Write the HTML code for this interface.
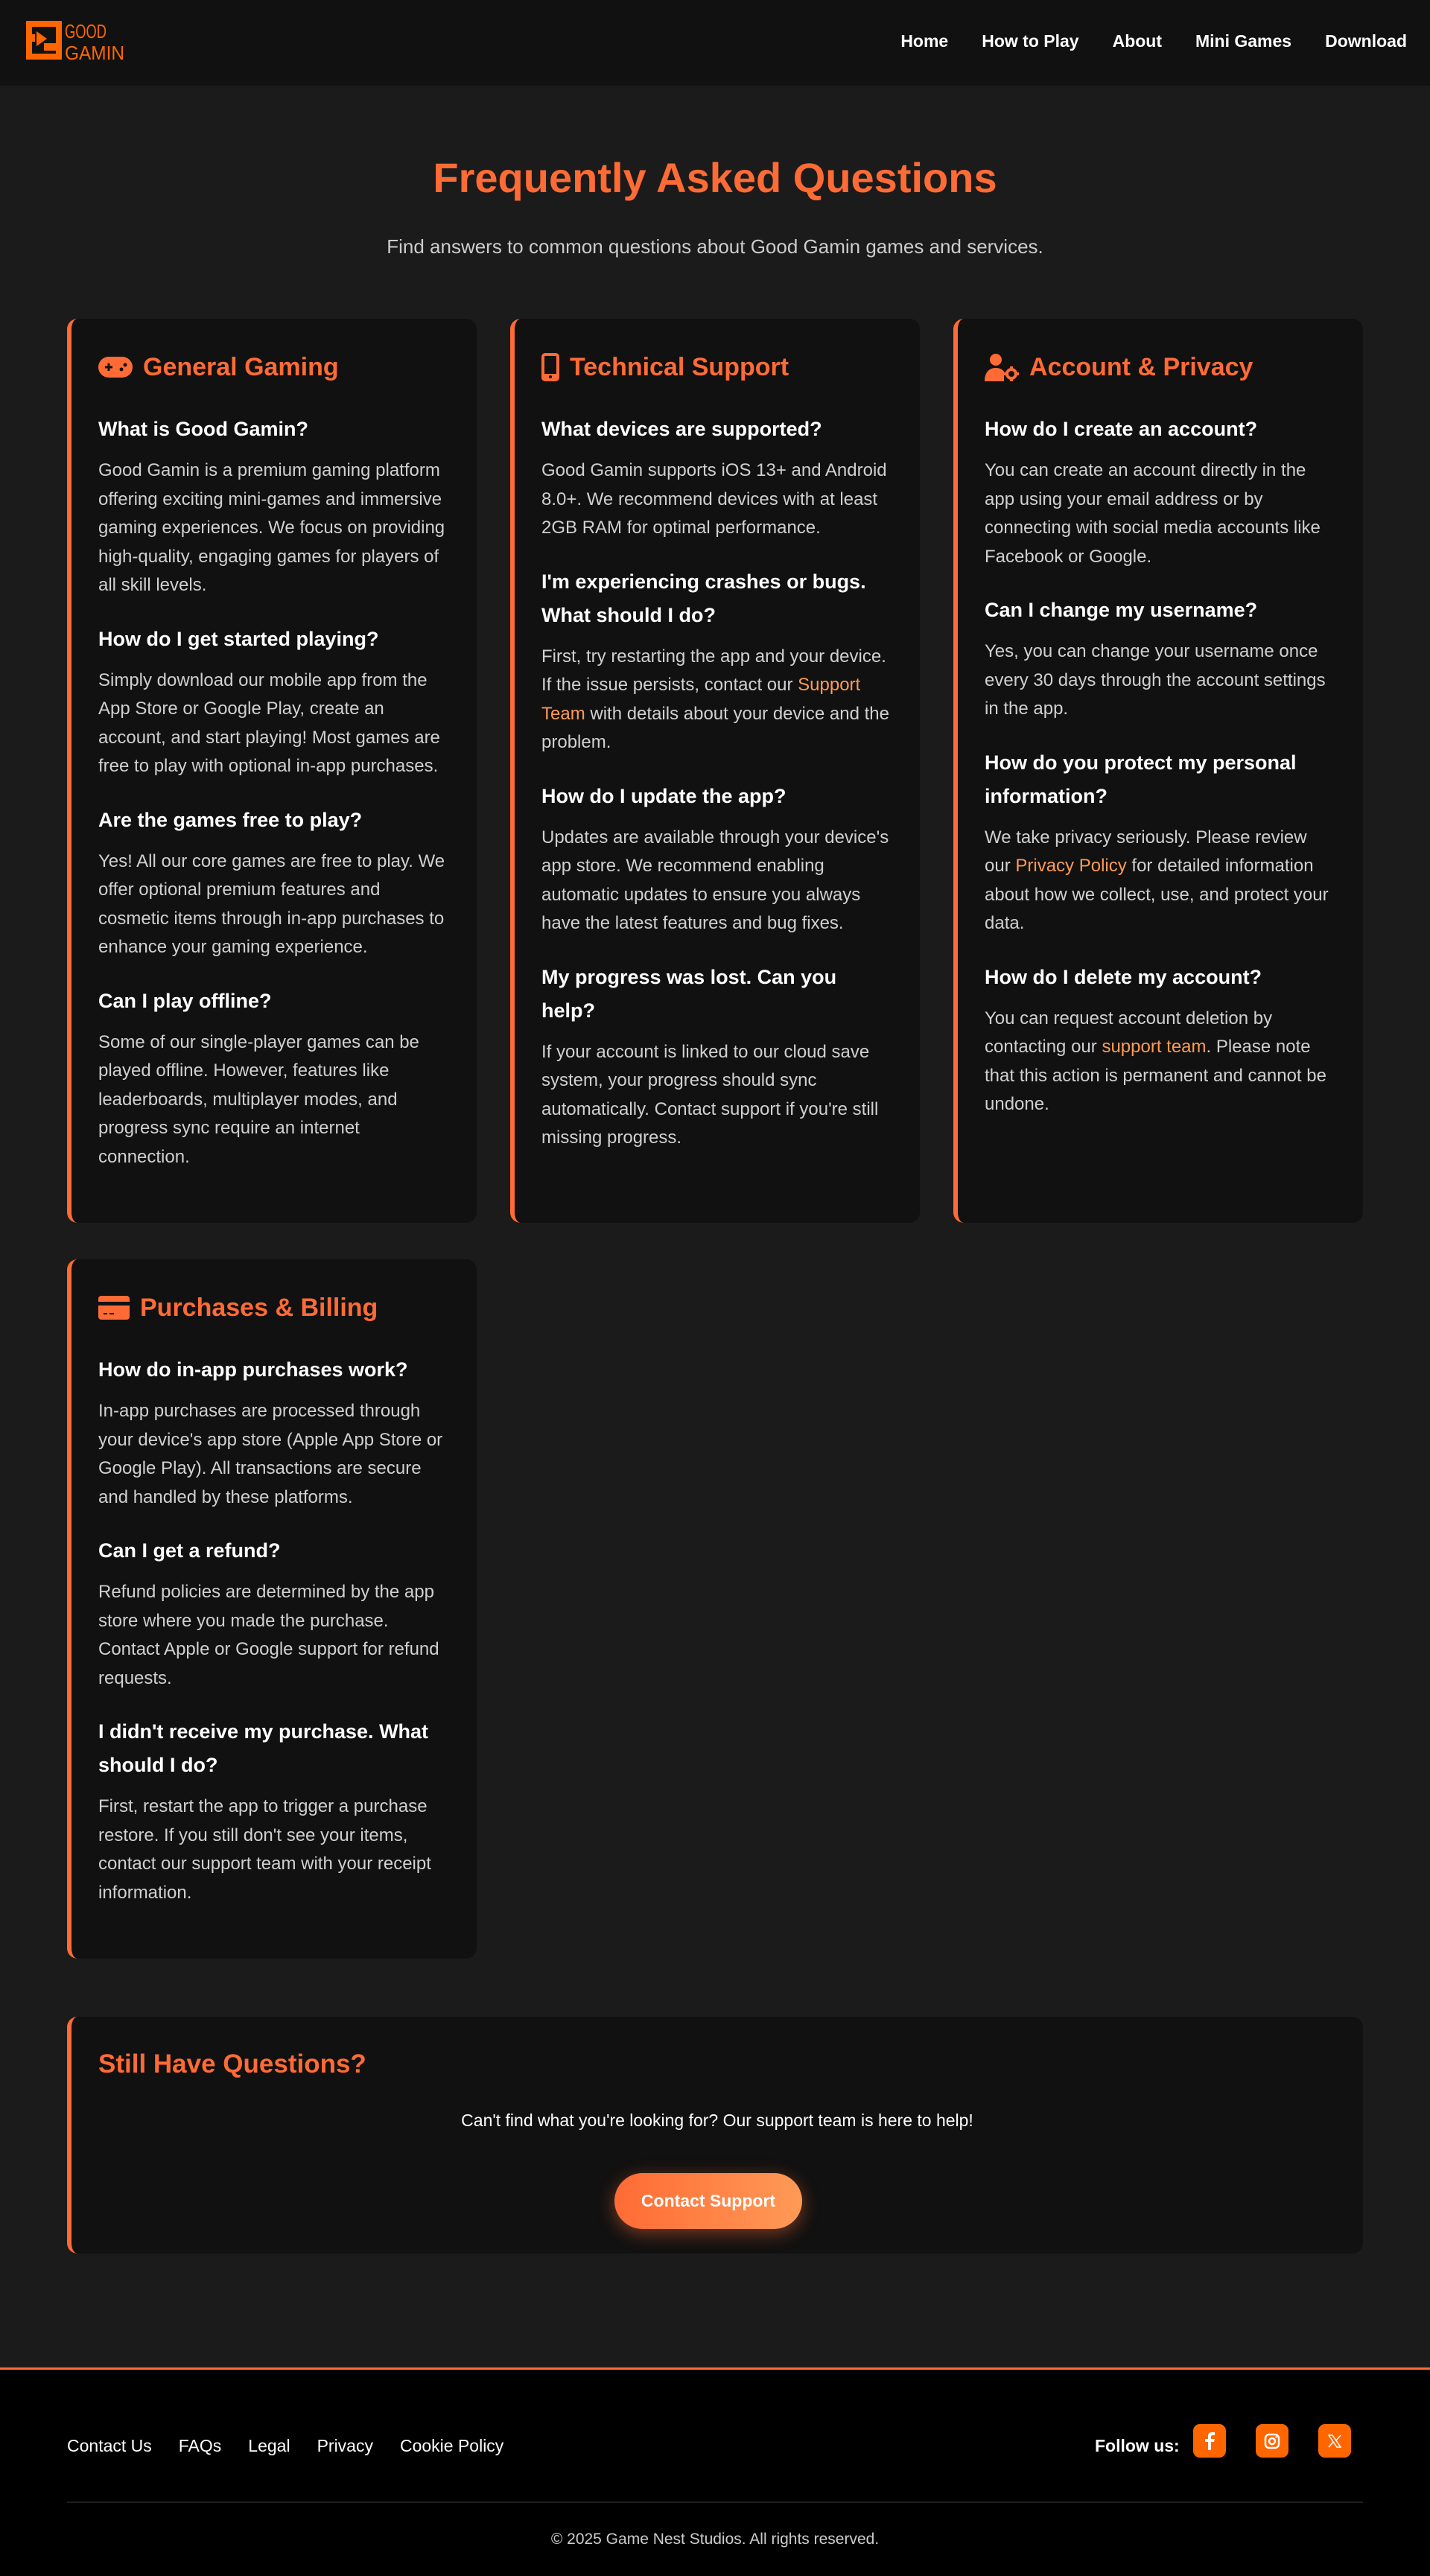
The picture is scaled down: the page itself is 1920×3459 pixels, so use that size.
<!DOCTYPE html>
<html><head><meta charset="utf-8">
<style>
*{box-sizing:border-box;margin:0;padding:0}
body{width:1920px;height:3459px;background:#1b1b1b;font-family:"Liberation Sans",Arial,sans-serif;color:#ccc;overflow:hidden}
nav{height:115px;background:#111;position:relative}
.logo{position:absolute;left:33px;top:26px}
.links{position:absolute;right:31px;top:42px;display:flex;gap:45px}
.links a{color:#fff;text-decoration:none;font-size:23px;font-weight:bold}
h1{color:#ff6b35;text-align:center;font-size:56px;font-weight:bold;position:absolute;top:206px;width:1920px}
.sub{position:absolute;top:316px;width:1920px;text-align:center;font-size:26px;color:#ccc}
.grid{position:absolute;left:90px;top:428px;width:1740px;display:grid;grid-template-columns:550px 550px 550px;column-gap:45px;row-gap:49px}
.card{background:#111;border-left:6px solid #ff6b35;border-radius:14px;padding:37px 38px 39px 36px}
.card h3{color:#ff6b35;font-size:34px;line-height:56px;font-weight:bold;margin-bottom:33px;display:flex;align-items:center;gap:14px}
.card h4{color:#fff;font-size:27px;line-height:45px;font-weight:bold;margin-bottom:14px}
.card p{font-size:24px;line-height:38.5px;margin-bottom:30px;color:#d0d0d0}
.card a{color:#ff9a56;text-decoration:none}
.cta{position:absolute;left:90px;top:2708px;width:1740px;height:318px;background:#111;border-left:6px solid #ff6b35;border-radius:14px}
.cta h2{position:absolute;left:36px;top:44px;color:#ff6b35;font-size:35px;font-weight:bold}
.cta p{position:absolute;top:126px;width:100%;text-align:center;color:#fff;font-size:23px}
.btn{position:absolute;left:729px;top:210px;width:252px;height:75px;border-radius:38px;background:linear-gradient(90deg,#ff6b35,#ff9a56);color:#fff;font-weight:bold;font-size:23px;display:flex;align-items:center;justify-content:center;box-shadow:0 6px 24px rgba(255,107,53,.45)}
footer{position:absolute;top:3179px;left:0;width:1920px;height:280px;background:#000;border-top:3px solid #ff6b35}
.fl{position:absolute;left:90px;top:89px;display:flex;gap:36px}
.fl a{color:#fff;font-size:23px;text-decoration:none}
.fu{position:absolute;left:1470px;top:89px;color:#fff;font-size:23px;font-weight:bold}
.soc{position:absolute;top:73px;width:44px;height:45px;border-radius:9px;background:#ff6600;display:flex;align-items:center;justify-content:center;color:#fff}
.hr{position:absolute;left:90px;top:177px;width:1740px;height:2px;background:#1e1e1e}
.copy{position:absolute;top:216px;width:1920px;text-align:center;color:#ccc;font-size:21px}
</style></head><body>
<nav>
<svg class="logo" width="140" height="56" viewBox="0 0 140 56">
<rect x="2" y="2" width="48" height="52" fill="#ff6600"/>
<rect x="10" y="10" width="32" height="36" fill="#111"/>
<rect x="2" y="20" width="12" height="10" fill="#ff6600"/>
<path d="M16 16 L30 26 L16 36Z" fill="#ff6600"/>
<rect x="26" y="32" width="24" height="10" fill="#ff6600"/>
<text x="54" y="25" fill="#ff6600" font-family="Liberation Sans Narrow,Liberation Sans,sans-serif" font-size="26" textLength="56" lengthAdjust="spacingAndGlyphs">GOOD</text>
<text x="54" y="54" fill="#ff6600" font-family="Liberation Sans Narrow,Liberation Sans,sans-serif" font-size="26" textLength="80" lengthAdjust="spacingAndGlyphs">GAMIN</text>
</svg>
<div class="links"><a>Home</a><a>How to Play</a><a>About</a><a>Mini Games</a><a>Download</a></div>
</nav>
<h1>Frequently Asked Questions</h1>
<div class="sub">Find answers to common questions about Good Gamin games and services.</div>
<div class="grid">
<div class="card">
<h3><svg width="46" height="32" viewBox="0 0 46 32"><rect x="0" y="2" width="46" height="28" rx="14" fill="#ff6b35"/><path d="M9 16h10M14 11v10" stroke="#111" stroke-width="3"/><circle cx="31" cy="19" r="2.5" fill="#111"/><circle cx="36" cy="13" r="2.5" fill="#111"/></svg>General Gaming</h3>
<h4>What is Good Gamin?</h4>
<p>Good Gamin is a premium gaming platform offering exciting mini-games and immersive gaming experiences. We focus on providing high-quality, engaging games for players of all skill levels.</p>
<h4>How do I get started playing?</h4>
<p>Simply download our mobile app from the App Store or Google Play, create an account, and start playing! Most games are free to play with optional in-app purchases.</p>
<h4>Are the games free to play?</h4>
<p>Yes! All our core games are free to play. We offer optional premium features and cosmetic items through in-app purchases to enhance your gaming experience.</p>
<h4>Can I play offline?</h4>
<p>Some of our single-player games can be played offline. However, features like leaderboards, multiplayer modes, and progress sync require an internet connection.</p>
</div>
<div class="card">
<h3><svg width="24" height="38" viewBox="0 0 24 38"><rect x="2" y="2" width="20" height="34" rx="3" fill="none" stroke="#ff6b35" stroke-width="4"/><rect x="2" y="28" width="20" height="8" fill="#ff6b35"/><circle cx="12" cy="32" r="2" fill="#111"/></svg>Technical Support</h3>
<h4>What devices are supported?</h4>
<p>Good Gamin supports iOS 13+ and Android 8.0+. We recommend devices with at least 2GB RAM for optimal performance.</p>
<h4>I'm experiencing crashes or bugs. What should I do?</h4>
<p>First, try restarting the app and your device. If the issue persists, contact our <a>Support Team</a> with details about your device and the problem.</p>
<h4>How do I update the app?</h4>
<p>Updates are available through your device's app store. We recommend enabling automatic updates to ensure you always have the latest features and bug fixes.</p>
<h4>My progress was lost. Can you help?</h4>
<p>If your account is linked to our cloud save system, your progress should sync automatically. Contact support if you're still missing progress.</p>
</div>
<div class="card">
<h3><svg width="46" height="38" viewBox="0 0 46 38"><circle cx="15" cy="9" r="8" fill="#ff6b35"/><path d="M0 38c0-12 6-18 15-18c5 0 9 2 11 5v13z" fill="#ff6b35"/><circle cx="36" cy="28" r="6" fill="none" stroke="#ff6b35" stroke-width="4"/><path d="M36 18v5M36 33v5M26 28h5M41 28h5" stroke="#ff6b35" stroke-width="4"/></svg>Account &amp; Privacy</h3>
<h4>How do I create an account?</h4>
<p>You can create an account directly in the app using your email address or by connecting with social media accounts like Facebook or Google.</p>
<h4>Can I change my username?</h4>
<p>Yes, you can change your username once every 30 days through the account settings in the app.</p>
<h4>How do you protect my personal information?</h4>
<p>We take privacy seriously. Please review our <a>Privacy Policy</a> for detailed information about how we collect, use, and protect your data.</p>
<h4>How do I delete my account?</h4>
<p>You can request account deletion by contacting our <a>support team</a>. Please note that this action is permanent and cannot be undone.</p>
</div>
<div class="card">
<h3><svg width="42" height="32" viewBox="0 0 42 32"><rect x="0" y="0" width="42" height="32" rx="4" fill="#ff6b35"/><rect x="0" y="8" width="42" height="5" fill="#111"/><path d="M7 24h5M15 24h6" stroke="#111" stroke-width="2"/></svg>Purchases &amp; Billing</h3>
<h4>How do in-app purchases work?</h4>
<p>In-app purchases are processed through your device's app store (Apple App Store or Google Play). All transactions are secure and handled by these platforms.</p>
<h4>Can I get a refund?</h4>
<p>Refund policies are determined by the app store where you made the purchase. Contact Apple or Google support for refund requests.</p>
<h4>I didn't receive my purchase. What should I do?</h4>
<p>First, restart the app to trigger a purchase restore. If you still don't see your items, contact our support team with your receipt information.</p>
</div>
</div>
<div class="cta">
<h2>Still Have Questions?</h2>
<p>Can't find what you're looking for? Our support team is here to help!</p>
<div class="btn">Contact Support</div>
</div>
<footer>
<div class="fl"><a>Contact Us</a><a>FAQs</a><a>Legal</a><a>Privacy</a><a>Cookie Policy</a></div>
<div class="fu">Follow us:</div>
<div class="soc" style="left:1602px"><svg width="14" height="24" viewBox="0 0 14 24"><path d="M9 24V13h4l1-4H9V6c0-1 .5-2 2-2h3V0h-4C6 0 5 3 5 5v4H1v4h4v11z" fill="#fff"/></svg></div>
<div class="soc" style="left:1686px"><svg width="22" height="22" viewBox="0 0 22 22"><rect x="2" y="2" width="18" height="18" rx="5" fill="none" stroke="#fff" stroke-width="2.5"/><circle cx="11" cy="11" r="4" fill="none" stroke="#fff" stroke-width="2.5"/><circle cx="16.5" cy="5.5" r="1.3" fill="#fff"/></svg></div>
<div class="soc" style="left:1770px"><svg width="18" height="18" viewBox="0 0 18 18"><path d="M1 1h5l11 16h-5zM17 1L10.5 8.5M1 17l6.5-7.5" stroke="#fff" stroke-width="1.5" fill="none"/></svg></div>
<div class="hr"></div>
<div class="copy">© 2025 Game Nest Studios. All rights reserved.</div>
</footer>
</body></html>
